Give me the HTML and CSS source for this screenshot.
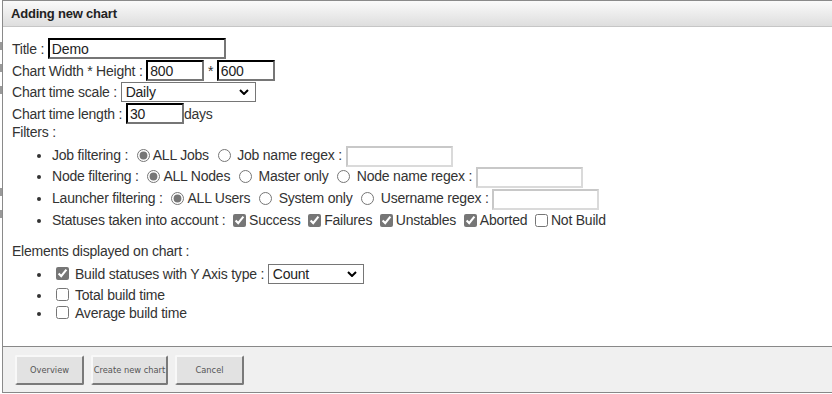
FILE: index.html
```html
<!DOCTYPE html>
<html>
<head>
<meta charset="utf-8">
<link rel="stylesheet" href="styles.css">
</head>
<body>
<div class="page">
  <div class="behind">
    <i class="frag f1"></i><i class="frag f2"></i><i class="frag f3"></i><i class="frag f4"></i><i class="frag f5"></i>
  </div>
  <div class="dialog">
    <div class="titlebar">Adding new chart</div>
    <div class="content">
      <div class="row">Title : <input class="inp w-title" type="text" value="Demo"></div>
      <div class="row">Chart Width * Height : <input class="inp w-num" type="text" value="800"> * <input class="inp w-num" type="text" value="600"></div>
      <div class="row">Chart time scale : <span class="sel w-scale">Daily<svg class="chev" viewBox="0 0 10 6" width="10" height="6"><path d="M1 1 L5 5 L9 1" fill="none" stroke="#000" stroke-width="2"/></svg></span></div>
      <div class="row">Chart time length : <input class="inp w-len" type="text" value="30">days</div>
      <div class="row plain filt">Filters :</div>
      <ul class="list filters">
        <li>Job filtering : <input type="radio" name="j" checked>ALL Jobs <input type="radio" name="j"> Job name regex : <input class="inp light w-rx1" type="text"></li>
        <li>Node filtering : <input type="radio" name="n" checked>ALL Nodes <input type="radio" name="n"> Master only <input type="radio" name="n"> Node name regex : <input class="inp light w-rx2" type="text"></li>
        <li>Launcher filtering : <input type="radio" name="l" checked>ALL Users <input type="radio" name="l"> System only <input type="radio" name="l"> Username regex : <input class="inp light w-rx3" type="text"></li>
        <li>Statuses taken into account : <input type="checkbox" checked>Success <input type="checkbox" checked>Failures <input type="checkbox" checked>Unstables <input type="checkbox" checked>Aborted <input type="checkbox">Not Build</li>
      </ul>
      <div class="row plain elements">Elements displayed on chart :</div>
      <ul class="list elems">
        <li class="tall"><input type="checkbox" checked>Build statuses with Y Axis type : <span class="sel w-count">Count<svg class="chev" viewBox="0 0 10 6" width="10" height="6"><path d="M1 1 L5 5 L9 1" fill="none" stroke="#000" stroke-width="2"/></svg></span></li>
        <li><input type="checkbox">Total build time</li>
        <li><input type="checkbox">Average build time</li>
      </ul>
    </div>
    <div class="buttonpane">
      <button class="btn b1">Overview</button>
      <button class="btn b2">Create new chart</button>
      <button class="btn b3">Cancel</button>
    </div>
  </div>
</div>
</body>
</html>
```
FILE: styles.css
```css
html, body {
  margin: 0;
  padding: 0;
  background: #fff;
}
.page {
  display: flex;
  height: 394px;
  overflow: hidden;
  font-family: "Liberation Sans", Arial, sans-serif;
  font-size: 14px;
  letter-spacing: -0.22px;
  color: #333;
}
.behind {
  width: 2px;
  display: flex;
  flex-direction: column;
  padding-top: 42px;
}
.frag {
  display: block;
  width: 2px;
  height: 8px;
  background: #9a9a9a;
  margin-bottom: 14px;
}
.f4 { margin-top: 80px; }
.dialog {
  flex: 1;
  display: flex;
  flex-direction: column;
  border-left: 1px solid #8a8a8a;
  border-top: 1px solid #8a8a8a;
  height: 393px;
  box-sizing: border-box;
}
.titlebar {
  height: 26px;
  box-sizing: border-box;
  border-bottom: 1px solid #c6c6c6;
  background: linear-gradient(#fafafa, #dedede);
  font-weight: bold;
  font-size: 13px;
  letter-spacing: -0.2px;
  color: #222;
  padding: 5px 0 0 8px;
}
.content {
  flex: 1;
  padding: 11px 0 0 9px;
  border-bottom: 1px solid #888;
}
.row {
  height: 21.7px;
  display: flex;
  align-items: center;
  white-space: pre;
}
.row.filt {
  height: 15px;
}
.row.plain.elements {
  height: 17px;
}
.inp {
  box-sizing: border-box;
  height: 21px;
  font: 14px "Liberation Sans", Arial, sans-serif;
  letter-spacing: -0.15px;
  color: #222;
  padding: 0 2px;
  margin: 0;
  border: 2px inset #767676;
  border-color: #222 #767676 #767676 #222;
  background: #fff;
  outline: none;
}
.inp.light {
  border: 2px solid #d6d6d6;
  border-color: #c8c8c8 #dadada #dadada #c8c8c8;
  height: 21px;
}
.w-title { width: 178px; }
.w-num { width: 58px; }
.w-len { width: 58px; }
.w-rx1 { width: 107px; }
.w-rx2 { width: 107px; }
.w-rx3 { width: 107px; }
.sel {
  box-sizing: border-box;
  display: inline-flex;
  align-items: center;
  justify-content: space-between;
  height: 20px;
  border: 1px solid #767676;
  padding: 0 6px 0 4px;
  color: #222;
  background: #fff;
}
.w-scale { width: 135px; }
.w-count { width: 96px; }
.chev { display: block; }
.list {
  margin: 0;
  padding: 0 0 0 40px;
}
.list li {
  white-space: pre;
  display: list-item;
}
.filters li {
  height: 21.7px;
  line-height: 21px;
}
.filters li input, .elems li input {
  vertical-align: middle;
}
.filters {
  margin-top: 5px;
}
.elements {
  margin-top: 11px;
}
.elems {
  margin-top: 2px;
}
.elems li {
  height: 18px;
  line-height: 18px;
}
.elems li.tall {
  height: 24px;
  line-height: 24px;
}
input[type=radio], input[type=checkbox] {
  accent-color: #767676;
  width: 13px;
  height: 13px;
  margin: 0 3px 0 5px;
  position: relative;
  top: -1px;
}
input[type=checkbox] {
  margin: 0 3px 0 4px;
}
.elems input[type=checkbox] {
  margin: 0 6px 0 4px;
}
.buttonpane {
  height: 46px;
  box-sizing: border-box;
  background: #f0f0f0;
  border-bottom: 1px solid #888;
  display: flex;
  align-items: flex-start;
  gap: 7px;
  padding: 8px 0 0 12px;
}
.btn {
  height: 30px;
  box-sizing: border-box;
  background: #e2e2e2;
  border: 2px solid;
  border-color: #f8f8f8 #7a7a7a #7a7a7a #f8f8f8;
  border-radius: 2px;
  font-family: "DejaVu Sans", Verdana, sans-serif;
  font-size: 8.3px;
  letter-spacing: 0;
  color: #555;
  padding: 0;
  margin: 0;
}
.b1 { width: 69px; }
.b2 { width: 77px; }
.b3 { width: 69px; }
```
